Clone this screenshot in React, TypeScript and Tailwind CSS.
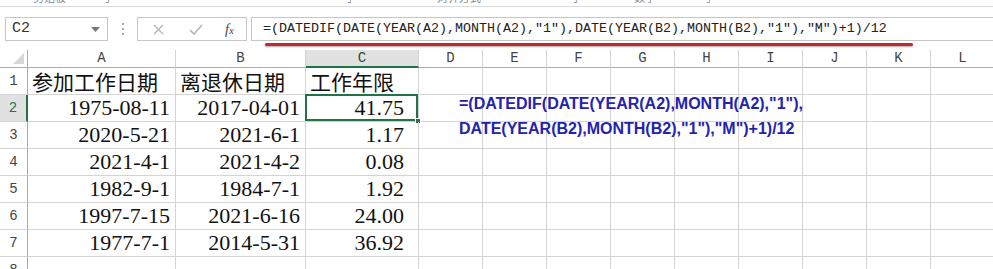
import React from 'react';

const mono = { fontFamily: '"Liberation Mono", "Noto Sans CJK SC", monospace' };
const serif = { fontFamily: '"Liberation Serif", "Noto Sans CJK SC", serif' };
const cjk = { fontFamily: '"Noto Sans CJK SC", "Liberation Sans", sans-serif' };

const cols = ['A', 'B', 'C', 'D', 'E', 'F', 'G', 'H', 'I', 'J', 'K', 'L'];

const data = [
  ['参加工作日期', '离退休日期', '工作年限'],
  ['1975-08-11', '2017-04-01', '41.75'],
  ['2020-5-21', '2021-6-1', '1.17'],
  ['2021-4-1', '2021-4-2', '0.08'],
  ['1982-9-1', '1984-7-1', '1.92'],
  ['1997-7-15', '2021-6-16', '24.00'],
  ['1977-7-1', '2014-5-31', '36.92'],
  ['', '', ''],
];

const formula = '=(DATEDIF(DATE(YEAR(A2),MONTH(A2),"1"),DATE(YEAR(B2),MONTH(B2),"1"),"M")+1)/12';

function TopStrip() {
  // cut-off ribbon labels at the very top
  return (
    <div className="flex h-[7px] overflow-hidden border-b border-[#dadada] text-[11px] leading-[11px] text-[#888]" style={cjk}>
      <span className="ml-[33px] -mt-[8px] w-[37px] overflow-hidden whitespace-nowrap">剪贴板</span>
      <span className="ml-[35px] -mt-[8px] text-[10px]">⌟</span>
      <span className="ml-[237px] -mt-[8px] text-[10px]">⌟</span>
      <span className="ml-[85px] -mt-[8px] w-[44px] overflow-hidden whitespace-nowrap">对齐方式</span>
      <span className="ml-[92px] -mt-[8px] text-[10px]">⌟</span>
      <span className="ml-[56px] -mt-[8px] w-[36px] overflow-hidden whitespace-nowrap">数字</span>
      <span className="ml-[36px] -mt-[8px] text-[10px]">⌟</span>
    </div>
  );
}

function FormulaBar() {
  return (
    <div className="mt-[10px] flex h-[24px] items-stretch">
      <div className="ml-[5px] flex w-[103px] items-center justify-between border border-[#c6c6c6] pl-[6px] pr-[7px]">
        <span className="text-[15px] text-[#333]" style={mono}>C2</span>
        <svg width="9" height="5" viewBox="0 0 9 5">
          <path d="M0 0 L9 0 L4.5 5 Z" fill="#777" />
        </svg>
      </div>
      <div className="ml-[13px] flex w-[3px] flex-col items-center justify-center gap-[3px]">
        <span className="h-[2px] w-[2px] bg-[#aaa]" />
        <span className="h-[2px] w-[2px] bg-[#aaa]" />
        <span className="h-[2px] w-[2px] bg-[#aaa]" />
      </div>
      <div className="ml-[13px] flex w-[110px] items-center border border-[#c6c6c6] pl-[15px]">
        <svg width="11" height="11" viewBox="0 0 11 11">
          <path d="M1 1 L10 10 M10 1 L1 10" stroke="#b5b5b5" strokeWidth="1.3" fill="none" />
        </svg>
        <svg className="ml-[25px]" width="14" height="11" viewBox="0 0 14 11">
          <path d="M1 6 L5 10 L13 1" stroke="#b5b5b5" strokeWidth="1.6" fill="none" />
        </svg>
        <span className="ml-[22px] text-[14px] italic text-[#444]" style={serif}>
          f<span className="text-[11px]">x</span>
        </span>
      </div>
      <div className="ml-[4px] flex flex-1 items-center border border-r-0 border-[#c6c6c6] pl-[11px]">
        <span className="whitespace-nowrap text-[13.33px] text-[#222]" style={mono}>{formula}</span>
      </div>
    </div>
  );
}

function Sheet() {
  return (
    <div className="relative mt-[9px]">
      <div className="grid grid-cols-[28px_148px_130px_113px_repeat(9,64px)]">
        {/* header row */}
        <div className="relative h-[18px] border-b border-r border-[#ababab]">
          <svg className="absolute right-[3px] bottom-[3px]" width="11" height="11" viewBox="0 0 11 11">
            <path d="M11 0 L11 11 L0 11 Z" fill="#d7d7d7" />
          </svg>
        </div>
        {cols.map((c) => (
          <div
            key={c}
            className={
              c === 'C'
                ? 'flex h-[18px] items-center justify-center border-b-2 border-r border-b-[#217346] border-r-[#d4d4d4] bg-[#e1e1e1] pt-[1px] text-[14px] text-[#1f4e34]'
                : 'flex h-[18px] items-center justify-center border-b border-r border-b-[#ababab] border-r-[#d4d4d4] text-[14px] text-[#444]'
            }
            style={mono}
          >
            {c}
          </div>
        ))}

        {data.map((row, ri) => (
          <React.Fragment key={ri}>
            <div
              className={
                ri === 1
                  ? 'flex h-[27px] items-end justify-center border-b border-r-2 border-b-[#d4d4d4] border-r-[#217346] bg-[#e1e1e1] pb-[2px] text-[14px] text-[#217346]'
                  : 'flex h-[27px] items-end justify-center border-b border-r border-b-[#d4d4d4] border-r-[#ababab] pb-[2px] text-[14px] text-[#444]'
              }
              style={mono}
            >
              {ri + 1}
            </div>
            {row.map((v, ci) => (
              <div
                key={ci}
                className={
                  ri === 0
                    ? 'relative flex h-[27px] items-end whitespace-nowrap border-b border-r border-[#d4d4d4] pl-[4px] text-[21px] leading-[26px] text-[#111]'
                    : ci === 2
                      ? 'relative flex h-[27px] items-end justify-end whitespace-nowrap border-b border-r border-[#d4d4d4] pr-[14px] text-[22px] leading-[26px] text-[#111]'
                      : 'relative flex h-[27px] items-end justify-end whitespace-nowrap border-b border-r border-[#d4d4d4] pr-[5px] text-[22px] leading-[26px] text-[#111]'
                }
                style={ri === 0 ? cjk : serif}
              >
                {v}
                {ri === 1 && ci === 2 && (
                  <>
                    <div className="absolute -left-px -top-px right-0 bottom-0 border-2 border-[#217346]" />
                    <div className="absolute -right-[3px] -bottom-[3px] h-[6px] w-[6px] border border-white bg-[#217346]" />
                  </>
                )}
              </div>
            ))}
            {Array.from({ length: 9 }).map((_, k) => (
              <div key={'e' + k} className="h-[27px] border-b border-r border-[#d4d4d4]" />
            ))}
          </React.Fragment>
        ))}
      </div>

      {/* annotation text laid over the grid */}
      <div
        className="absolute left-[459px] top-[41px] text-[16px] font-bold leading-[25px] text-[#2323b0]"
        style={{ fontFamily: '"Liberation Sans", Arial, sans-serif' }}
      >
        <div>=(DATEDIF(DATE(YEAR(A2),MONTH(A2),"1"),</div>
        <div>DATE(YEAR(B2),MONTH(B2),"1"),"M")+1)/12</div>
      </div>
    </div>
  );
}

export default function App() {
  return (
    <div className="relative h-[269px] w-[993px] overflow-hidden bg-white">
      <TopStrip />
      <FormulaBar />
      {/* red underline annotation */}
      <div className="absolute left-[265px] top-[43px] h-[3px] w-[648px] rounded-full bg-[#c3262d] shadow-[0_1px_2px_rgba(0,0,0,0.35)]" />
      <Sheet />
    </div>
  );
}
